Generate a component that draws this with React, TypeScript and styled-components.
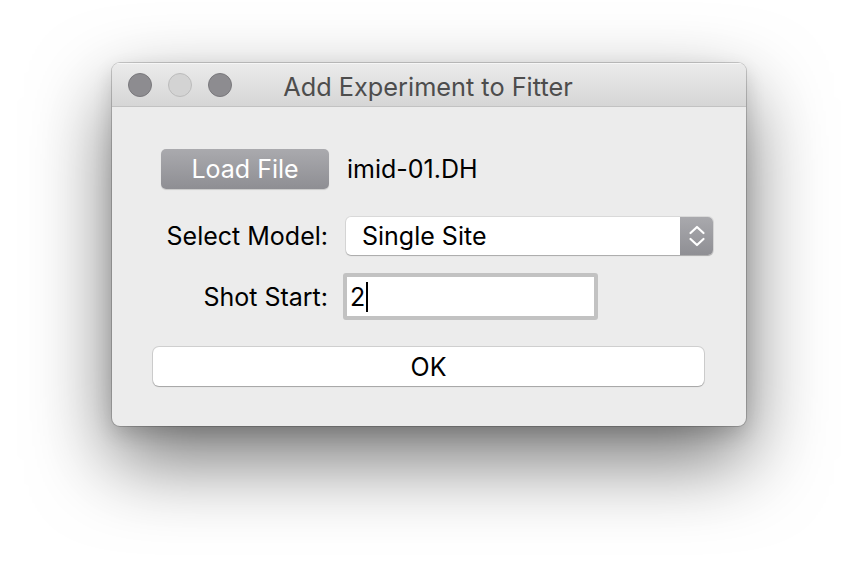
import React from 'react';
import styled, { createGlobalStyle } from 'styled-components';

const GlobalStyle = createGlobalStyle`
  html, body {
    margin: 0;
    padding: 0;
    background: #ffffff;
  }
  body {
    font-family: Inter, "Liberation Sans", sans-serif;
    -webkit-font-smoothing: antialiased;
  }
`;

function Chevrons() {
  return (
    <svg width="18" height="24" viewBox="0 0 18 24" fill="none">
      <path d="M2.5 9 L9 3 L15.5 9" stroke="#fff" strokeWidth="2.2" strokeLinecap="round" strokeLinejoin="round" />
      <path d="M2.5 15 L9 21 L15.5 15" stroke="#fff" strokeWidth="2.2" strokeLinecap="round" strokeLinejoin="round" />
    </svg>
  );
}

export default function App() {
  return (
    <Page>
      <GlobalStyle />
      <Window>
        <TitleBar>
          <Lights>
            <Light />
            <Light muted />
            <Light />
          </Lights>
          <Title>Add Experiment to Fitter</Title>
        </TitleBar>
        <Content>
          <Row height={40}>
            <LoadButton type="button">Load File</LoadButton>
            <FileName>imid-01.DH</FileName>
          </Row>
          <Row height={38} space={28}>
            <Label>Select Model:</Label>
            <Select>
              <SelectValue>Single Site</SelectValue>
              <Stepper>
                <Chevrons />
              </Stepper>
            </Select>
          </Row>
          <Row height={47} space={18}>
            <Label>Shot Start:</Label>
            <InputBox>
              <InputText>2</InputText>
              <Caret />
            </InputBox>
          </Row>
          <OkButton type="button">OK</OkButton>
        </Content>
      </Window>
    </Page>
  );
}

const Page = styled.div`
  width: 858px;
  height: 586px;
  box-sizing: border-box;
  padding: 63px 0 0 112px;
  overflow: hidden;
`;

const Window = styled.div`
  width: 634px;
  height: 363px;
  border-radius: 8px;
  background: #ececec;
  box-shadow:
    0 0 0 1px rgba(0, 0, 0, 0.18),
    0 34px 80px rgba(0, 0, 0, 0.55),
    0 8px 20px rgba(0, 0, 0, 0.14);
  display: flex;
  flex-direction: column;
  overflow: hidden;
`;

const TitleBar = styled.div`
  height: 44px;
  flex: none;
  position: relative;
  display: flex;
  align-items: center;
  justify-content: center;
  background: linear-gradient(#ebebeb, #d6d6d6);
  border-bottom: 1px solid #c2c2c2;
  box-sizing: border-box;
  box-shadow: inset 0 1px 0 #f6f6f6;
`;

const Lights = styled.div`
  position: absolute;
  left: 16px;
  top: 1px;
  bottom: 0;
  display: flex;
  align-items: center;
  gap: 16px;
`;

const Light = styled.div<{ muted?: boolean }>`
  width: 24px;
  height: 24px;
  border-radius: 50%;
  box-sizing: border-box;
  background: ${(p) => (p.muted ? '#d3d3d3' : '#8d8c90')};
  border: 1px solid ${(p) => (p.muted ? '#bcbcbc' : '#79787c')};
`;

const Title = styled.div`
  font-size: 25.3px;
  color: #4d4d4d;
  margin-top: 4px;
  margin-left: -2px;
`;

const Content = styled.div`
  flex: 1;
  display: flex;
  flex-direction: column;
  padding: 42px 33px 0 41px;
`;

const Row = styled.div<{ height: number; space?: number }>`
  display: grid;
  grid-template-columns: 168px 1fr;
  column-gap: 17px;
  align-items: center;
  height: ${(p) => p.height}px;
  margin-top: ${(p) => p.space ?? 0}px;
  padding-left: 8px;
`;

const LoadButton = styled.button`
  height: 40px;
  width: 168px;
  border: none;
  border-radius: 5px;
  background: linear-gradient(#aaaaae, #8e8e93);
  box-shadow: 0 1px 1px rgba(0, 0, 0, 0.15);
  color: #ffffff;
  font-family: inherit;
  font-size: 25px;
  padding: 0;
`;

const FileName = styled.div`
  font-size: 25px;
  color: #000;
  padding-left: 1px;
`;

const Label = styled.div`
  font-size: 25px;
  color: #000;
  text-align: right;
  padding-right: 1px;
`;

const Select = styled.div`
  height: 38px;
  width: 367px;
  box-sizing: border-box;
  display: flex;
  border-radius: 5px;
  background: #ffffff;
  box-shadow:
    0 0 0 1px rgba(0, 0, 0, 0.08),
    0 1px 1px rgba(0, 0, 0, 0.22);
  overflow: hidden;
`;

const SelectValue = styled.div`
  flex: 1;
  display: flex;
  align-items: center;
  padding-left: 16px;
  font-size: 25px;
  color: #000;
`;

const Stepper = styled.div`
  width: 33px;
  display: flex;
  align-items: center;
  justify-content: center;
  background: linear-gradient(#a9a9ad, #8f8f94);
`;

const InputBox = styled.div`
  height: 47px;
  width: 255px;
  margin-left: -3px;
  box-sizing: border-box;
  border: 4px solid #c2c2c2;
  border-radius: 3px;
  background: #ffffff;
  display: flex;
  align-items: center;
  padding-left: 3px;
`;

const InputText = styled.span`
  font-size: 25px;
  color: #000;
`;

const Caret = styled.span`
  width: 2px;
  height: 30px;
  background: #000;
  margin-left: 1px;
`;

const OkButton = styled.button`
  margin-top: 27px;
  margin-right: 9px;
  height: 39px;
  border: none;
  border-radius: 6px;
  background: #ffffff;
  box-shadow:
    0 0 0 1px rgba(0, 0, 0, 0.12),
    0 1px 1px rgba(0, 0, 0, 0.2);
  color: #000;
  font-family: inherit;
  font-size: 25px;
  padding: 0;
`;
